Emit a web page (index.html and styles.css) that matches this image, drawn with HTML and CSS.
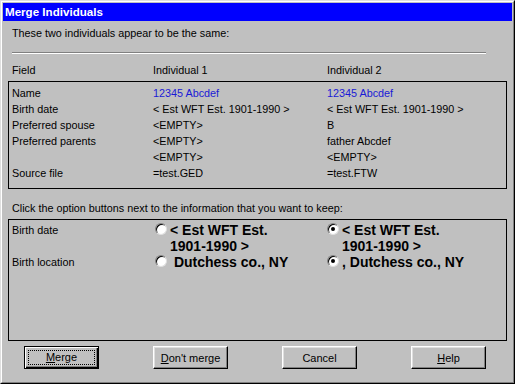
FILE: index.html
```html
<!DOCTYPE html>
<html lang="en">
<head>
  <meta charset="UTF-8" />
  <title>Merge Individuals</title>
  <link rel="stylesheet" href="styles.css">
</head>
<body>
  <div class="window">
    <div class="frame">
      <div class="title-bar">Merge Individuals</div>
      <div class="content">
        <p class="intro">These two individuals appear to be the same:</p>
        <div class="separator"></div>

        <div class="grid header-row">
          <div>Field</div><div>Individual 1</div><div>Individual 2</div>
        </div>
        <div class="box compare-box">
          <div class="grid">
            <div>Name</div><div class="blue">12345 Abcdef</div><div class="blue">12345 Abcdef</div>
            <div>Birth date</div><div>&lt; Est WFT Est. 1901-1990 &gt;</div><div>&lt; Est WFT Est. 1901-1990 &gt;</div>
            <div>Preferred spouse</div><div>&lt;EMPTY&gt;</div><div>B</div>
            <div>Preferred parents</div><div>&lt;EMPTY&gt;</div><div>father Abcdef</div>
            <div></div><div>&lt;EMPTY&gt;</div><div>&lt;EMPTY&gt;</div>
            <div>Source file</div><div>=test.GED</div><div>=test.FTW</div>
          </div>
        </div>

        <p class="hint">Click the option buttons next to the information that you want to keep:</p>
        <div class="box choose-box">
          <div class="choice-grid">
            <div class="label">Birth date</div>
            <label class="option"><span class="radio"></span><span class="opt-text">&lt; Est WFT Est. 1901-1990 &gt;</span></label>
            <label class="option"><span class="radio checked"></span><span class="opt-text">&lt; Est WFT Est. 1901-1990 &gt;</span></label>
            <div class="label">Birth location</div>
            <label class="option"><span class="radio"></span><span class="opt-text">&nbsp;Dutchess co., NY</span></label>
            <label class="option"><span class="radio checked"></span><span class="opt-text">, Dutchess co., NY</span></label>
          </div>
        </div>

        <div class="buttons">
          <button class="btn default"><span class="focus"><u>M</u>erge</span></button>
          <button class="btn"><u>D</u>on't merge</button>
          <button class="btn">Cancel</button>
          <button class="btn"><u>H</u>elp</button>
        </div>
      </div>
    </div>
  </div>
</body>
</html>
```

FILE: styles.css
```css
* {
  box-sizing: border-box;
}
body {
  margin: 0;
  font-family: 'Liberation Sans', Arial, sans-serif;
  font-size: 10.8px;
  color: #000;
  background: #c0c0c0;
}
.window {
  width: 515px;
  height: 384px;
  border: 1px solid;
  border-color: #dfdfdf #000 #000 #dfdfdf;
  background: #c0c0c0;
}
.frame {
  height: 100%;
  border: 1px solid;
  border-color: #fff #808080 #808080 #fff;
  padding: 1px;
}
.title-bar {
  height: 18px;
  line-height: 18px;
  padding-left: 2px;
  background: #0000ff;
  color: #fff;
  font-weight: bold;
  font-size: 11.6px;
}
.content {
  padding: 0 5px;
}
p {
  margin: 0;
  line-height: 16px;
}
.intro {
  margin-top: 4px;
  padding-left: 4px;
}
.separator {
  margin: 11px 0 0 4px;
  width: 474px;
  height: 2px;
  border-top: 1px solid #808080;
  border-bottom: 1px solid #fff;
}
.grid {
  display: grid;
  grid-template-columns: 141px 174px 1fr;
  line-height: 16px;
}
.header-row {
  margin-top: 8px;
  padding-left: 4px;
}
.box {
  border: 1px solid #000;
}
.compare-box {
  margin-top: 3px;
  height: 108px;
  padding: 3px 0 0 3px;
}
.blue {
  color: #1a1ad6;
}
.hint {
  margin-top: 11px;
  padding-left: 4px;
}
.choose-box {
  margin-top: 3px;
  height: 122px;
  padding: 2px 0 0 3px;
}
.choice-grid {
  display: grid;
  grid-template-columns: 143px 172px 1fr;
  line-height: 16px;
}
.option {
  display: flex;
  align-items: flex-start;
  gap: 3px;
}
.opt-text {
  width: 134px;
  font-size: 14px;
  font-weight: bold;
  line-height: 16px;
}
.radio {
  position: relative;
  flex: none;
  width: 12px;
  height: 12px;
  margin-top: 1px;
  border-radius: 50%;
  background: #fff;
  border: 1px solid;
  border-color: #808080 #dfdfdf #dfdfdf #808080;
  box-shadow: inset 1px 1px #000;
}
.radio.checked::after {
  content: "";
  position: absolute;
  left: 3px;
  top: 3px;
  width: 4px;
  height: 4px;
  border-radius: 50%;
  background: #000;
}
.buttons {
  display: flex;
  gap: 54px;
  margin-top: 5px;
  padding-left: 16px;
}
.btn {
  width: 75px;
  height: 23px;
  padding: 0;
  font-family: inherit;
  font-size: 11px;
  color: #000;
  background: #c0c0c0;
  border: 1px solid;
  border-color: #fff #000 #000 #fff;
  box-shadow: inset -1px -1px #808080, inset 1px 1px #dfdfdf;
}
.btn.default {
  border-color: #000;
  box-shadow: inset 1px 1px #fff, inset -1px -1px #000, inset -2px -2px #808080;
  padding: 3px;
}
.focus {
  display: block;
  height: 100%;
  line-height: 13px;
  border: 1px dotted #000;
}
```
